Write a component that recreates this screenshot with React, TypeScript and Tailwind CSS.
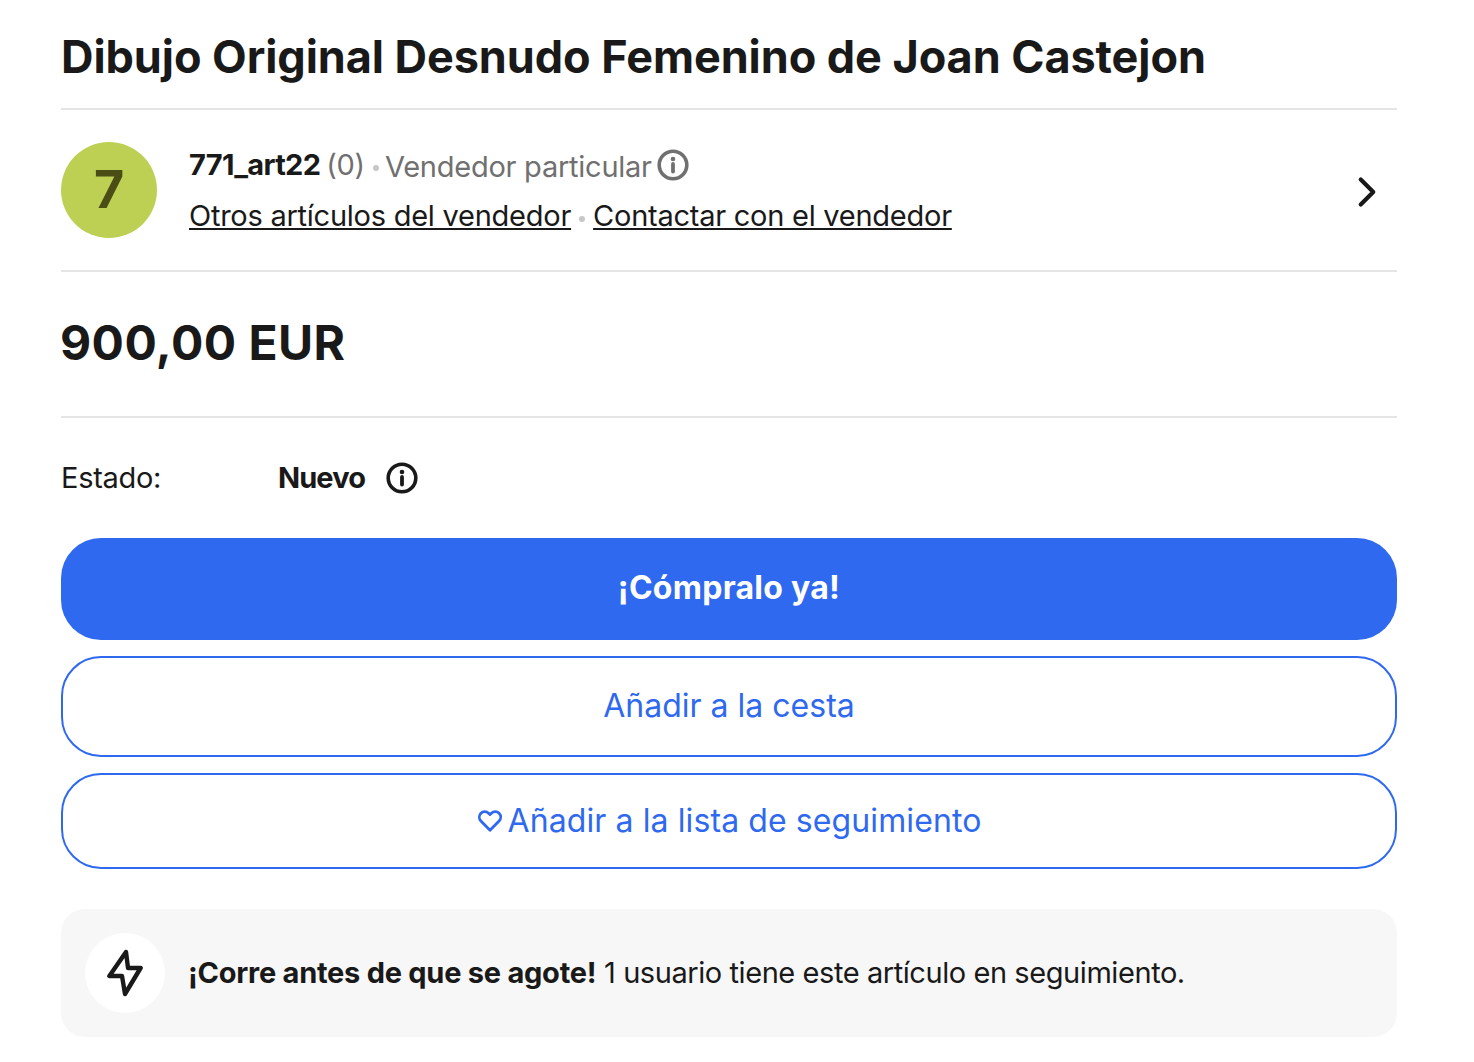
import React from 'react';
import { ChevronRight } from 'lucide-react';

const InfoIcon = ({ className }: { className: string }) => (
  <svg viewBox="0 0 32 32" className={className} fill="none" stroke="currentColor">
    <circle cx="16" cy="16" r="13.8" strokeWidth="3.6" />
    <circle cx="16" cy="10" r="2.3" fill="currentColor" stroke="none" />
    <path d="M16 15v7.5" strokeWidth="3.8" strokeLinecap="round" />
  </svg>
);

const Dot = () => <span className="w-[6px] h-[6px] rounded-full bg-[#c7c7c7] mt-[6px]" />;

const App: React.FC = () => {
  return (
    <div className="w-[1474px] h-[1062px] overflow-hidden bg-white pl-[61px] pr-[77px] font-['Inter',sans-serif] text-[#191919]">
      <h1 className="h-[110px] pt-[29px] border-b-2 border-[#e5e5e5] text-[45px] leading-[56px] font-bold tracking-[-0.07px] whitespace-nowrap">
        Dibujo Original Desnudo Femenino de Joan Castejon
      </h1>

      <div className="h-[162px] flex items-center border-b-2 border-[#e5e5e5]">
        <div className="w-24 h-24 rounded-full bg-[#bdd054] flex items-center justify-center text-[52px] font-bold text-[#4a4d14]">
          7
        </div>
        <div className="ml-8 flex-1 pt-[6px]">
          <div className="flex items-center h-[46px] text-[29px] whitespace-nowrap tracking-[-0.25px]">
            <span className="font-bold tracking-[-0.7px]">771_art22</span>
            <span className="ml-[6px] text-[#707070]">(0)</span>
            <span className="ml-[8px] mr-[6px] flex"><Dot /></span>
            <span className="text-[#707070] mt-1">Vendedor particular</span>
            <InfoIcon className="w-8 h-8 ml-[5px] text-[#707070]" />
          </div>
          <div className="flex items-center h-[56px] text-[29px] whitespace-nowrap tracking-[-0.25px]">
            <a className="underline underline-offset-2 decoration-2">Otros artículos del vendedor</a>
            <span className="mx-[8px] flex"><Dot /></span>
            <a className="underline underline-offset-2 decoration-2">Contactar con el vendedor</a>
          </div>
        </div>
        <ChevronRight className="w-[50px] h-[50px] mr-[5px] mt-1 text-[#191919]" strokeWidth={2} />
      </div>

      <div className="h-[146px] pb-[2px] flex items-center border-b-2 border-[#e5e5e5] text-[48px] font-bold tracking-[0.45px]">
        <span className="-ml-px">900,00 EUR</span>
      </div>

      <div className="h-[120px] flex items-center text-[29px]">
        <span className="w-[217px] tracking-[-0.3px]">Estado:</span>
        <span className="font-bold tracking-[-0.9px]">Nuevo</span>
        <InfoIcon className="w-8 h-8 ml-[21px] text-[#191919]" />
      </div>

      <div className="flex flex-col">
        <button className="h-[102px] pb-[2px] rounded-[40px] bg-[#2f69ef] text-white text-[32px] font-bold tracking-[0.26px]">
          ¡Cómpralo ya!
        </button>
        <button className="h-[101px] pb-[2px] mt-4 rounded-[40px] border-2 border-[#2f69ef] text-[#2f69ef] text-[32px]">
          Añadir a la cesta
        </button>
        <button className="h-[96px] mt-4 rounded-[40px] border-2 border-[#2f69ef] text-[#2f69ef] text-[32px] tracking-[0.1px] flex items-center justify-center">
          <svg viewBox="0 0 24 24" className="w-[26px] h-[26px] mr-[5px]" fill="none" stroke="currentColor" strokeWidth="2.6" strokeLinejoin="round">
            <path d="M12 20.5 3.6 12a5.2 5.2 0 0 1 0-7.2 5 5 0 0 1 7.1 0L12 6.1l1.3-1.3a5 5 0 0 1 7.1 0 5.2 5.2 0 0 1 0 7.2L12 20.5Z" />
          </svg>
          Añadir a la lista de seguimiento
        </button>
      </div>

      <div className="h-[128px] mt-10 rounded-3xl bg-[#f7f7f7] flex items-center pl-6">
        <div className="w-20 h-20 rounded-full bg-white flex items-center justify-center">
          <svg viewBox="0 0 36 48" className="w-9 h-12" fill="none" stroke="#191919" strokeWidth="4.4" strokeLinejoin="round" strokeLinecap="round">
            <path d="M19 3 2.4 27H15l3 18 15.6-26H21L19 3Z" />
          </svg>
        </div>
        <p className="ml-6 text-[29px] whitespace-nowrap tracking-[-0.43px]">
          <span className="font-bold tracking-[-0.25px] -ml-px">¡Corre antes de que se agote!</span> 1 usuario tiene este artículo en seguimiento.
        </p>
      </div>
    </div>
  );
};

export default App;
